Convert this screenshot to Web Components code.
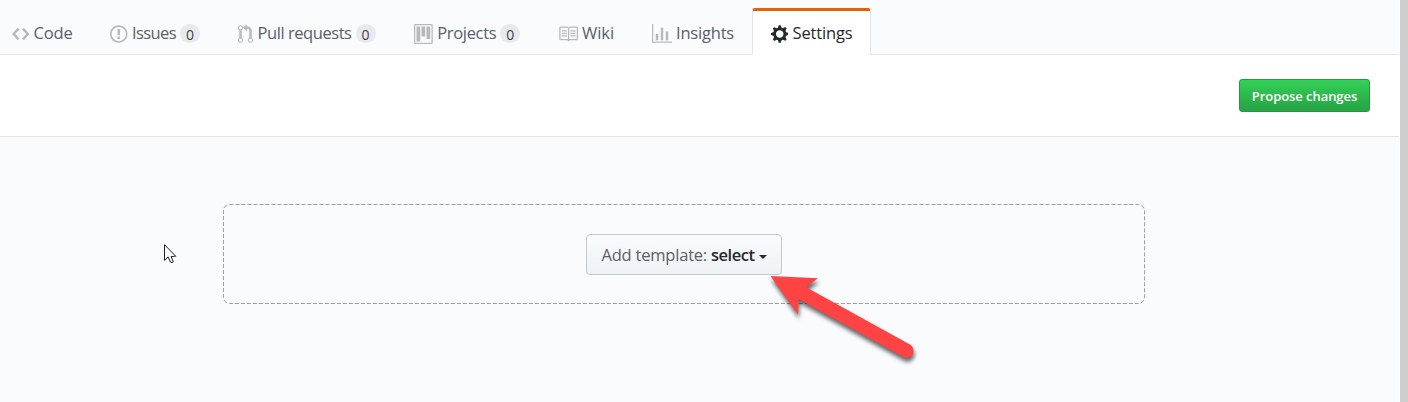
<!DOCTYPE html>
<html lang="en"><head><meta charset="utf-8"><title>Settings</title>
<style>html,body{margin:0;height:100%;overflow:hidden}body{font-family:"Open Sans","Noto Sans",sans-serif;background:#fafbfd}</style></head>
<body><settings-page></settings-page>
<script>
const define=(name,html,setup)=>customElements.define(name,class extends HTMLElement{
  constructor(){super();this.attachShadow({mode:'open'}).innerHTML=html}
  connectedCallback(){if(setup)setup(this,this.shadowRoot)}
});
const icons={
code:[14,'M9.5 3L8 4.5 11.5 8 8 11.5 9.5 13 14 8 9.5 3zm-5 0L0 8l4.5 5L6 11.5 2.5 8 6 4.5 4.5 3z'],
issue:[14,'M7 2.3c3.14 0 5.7 2.56 5.7 5.7s-2.56 5.7-5.7 5.7A5.71 5.71 0 0 1 1.3 8c0-3.14 2.56-5.7 5.7-5.7zM7 1C3.14 1 0 4.14 0 8s3.14 7 7 7 7-3.14 7-7-3.14-7-7-7zm1 3H6v5h2V4zm0 6H6v2h2v-2z'],
pull:[12,'M11 11.28V5c-.03-.78-.34-1.47-.94-2.06C9.46 2.35 8.78 2.03 8 2H7V0L4 3l3 3V4h1c.27.02.48.11.69.31.21.2.3.42.31.69v6.28A1.993 1.993 0 0 0 10 15a1.993 1.993 0 0 0 1-3.72zm-1 2.92c-.66 0-1.2-.55-1.2-1.2 0-.65.55-1.2 1.2-1.2.65 0 1.2.55 1.2 1.2 0 .65-.55 1.2-1.2 1.2zM4 3c0-1.11-.89-2-2-2a1.993 1.993 0 0 0-1 3.72v6.56A1.993 1.993 0 0 0 2 15a1.993 1.993 0 0 0 1-3.72V4.72c.59-.34 1-.98 1-1.72zm-.8 10c0 .66-.55 1.2-1.2 1.2-.65 0-1.2-.55-1.2-1.2 0-.65.55-1.2 1.2-1.2.65 0 1.2.55 1.2 1.2zM2 4.2C1.34 4.2.8 3.65.8 3c0-.65.55-1.2 1.2-1.2.65 0 1.2.55 1.2 1.2 0 .65-.55 1.2-1.2 1.2z'],
project:[15,'M10 12h3V2h-3v10zm-4-2h3V2H6v8zm-4 4h3V2H2v12zm-1 1h13V1H1v14zM14 0H1a1 1 0 0 0-1 1v14a1 1 0 0 0 1 1h13a1 1 0 0 0 1-1V1a1 1 0 0 0-1-1z'],
wiki:[16,'M3 5h4v1H3V5zm0 3h4V7H3v1zm0 2h4V9H3v1zm11-5h-4v1h4V5zm0 2h-4v1h4V7zm0 2h-4v1h4V9zm2-6v9c0 .55-.45 1-1 1H9.500l-1 1-1-1H2c-.55 0-1-.45-1-1V3c0-.55.45-1 1-1h5.500l1 1 1-1H15c.55 0 1 .45 1 1zm-8 .5L7.500 3H2v9h6V3.500zm7-.5H9.500l-.5.5V12h6V3z'],
graph:[16,'M16 14v1H0V0h1v14h15zM5 13H3V8h2v5zm4 0H7V3h2v10zm4 0h-2V6h2v7z'],
gear:[14,'M14 8.770v-1.600l-1.940-.640-.450-1.090.880-1.840-1.130-1.130-1.810.910-1.090-.450-.690-1.920h-1.600l-.630 1.940-1.110.450-1.840-.880-1.130 1.130.910 1.810-.450 1.090L0 7.230v1.590l1.940.640.450 1.090-.880 1.840 1.130 1.130 1.810-.910 1.090.450.690 1.920h1.590l.630-1.940 1.110-.450 1.840.880 1.130-1.130-.920-1.810.470-1.090L14 8.750v.020zM7 11c-1.660 0-3-1.340-3-3s1.340-3 3-3 3 1.340 3 3-1.340 3-3 3z']};
define('oct-icon','<style>:host{display:block;flex:none}svg{display:block;fill:currentColor;fill-rule:evenodd}</style><svg height="20"><path/></svg>',(h,r)=>{
  const [w,d]=icons[h.getAttribute('name')],s=r.querySelector('svg');
  s.setAttribute('viewBox',`0 0 ${w} 16`);s.setAttribute('width',w*1.25);s.firstChild.setAttribute('d',d);
});
/* A single-line label whose tracking adapts to its allotted width. */
define('fit-label','<style>:host{display:block;flex:none;white-space:nowrap}span{display:inline-block}</style><span><slot></slot></span>',(h,r)=>{
  const w=+h.getAttribute('width'),s=r.querySelector('span');h.style.width=w+'px';
  s.style.letterSpacing=(w-s.getBoundingClientRect().width)/h.textContent.length+'px';
});
define('count-pill','<style>:host{display:block;flex:none;width:20px;height:19px;border-radius:10px;background:#e7e9eb;color:#3c444c;font:500 14px/21px "Open Sans",sans-serif;text-align:center;margin:-2px 0 0 4px}</style><slot></slot>');
define('nav-tab',`<style>:host{display:flex;align-items:center;box-sizing:border-box;height:47px;padding:5px 0 0 19px;font-size:16.5px;line-height:24px;color:#586069}
::slotted(oct-icon){color:#b7babd}::slotted(fit-label){margin:-2px 0 0 var(--gap,4.500px)}
:host([active]){background:#fff;color:#24292e;border:1px solid #e1e4e8;border-top:3px solid #e36209;border-bottom:0;border-radius:3px 3px 0 0;padding:2px 0 0 17.5px}
:host([active]) ::slotted(oct-icon){color:#24292e}</style><slot name="icon"></slot><slot name="label"></slot><slot></slot>`);
define('repo-nav','<style>:host{display:grid;grid-template-columns:91px 128px 176px 144px 94px 119px 119px;box-sizing:border-box;height:55px;padding-top:8px;border-bottom:1px solid #e1e4e8}</style><slot></slot>');
define('propose-button','<style>:host{display:flex;justify-content:center;align-items:center;box-sizing:border-box;width:131px;height:33px;border:1px solid #28963f;border-radius:3px;background:linear-gradient(#34d058,#28a745 90%);color:#fff;font-size:13px;font-weight:600;line-height:20px;padding-top:1px}</style><fit-label width="105.500">Propose changes</fit-label>');
define('template-select',`<style>:host{display:flex;align-items:center;box-sizing:border-box;width:196px;height:41px;border:1px solid #c5c9cd;border-radius:4px;background:linear-gradient(#fafbfc,#eff3f6 90%);padding:1px 0 0 14.5px;font-size:16.5px;line-height:24px;color:#586069}
.value{font-weight:600;color:#24292e;margin-left:4px}i{border:4px solid transparent;border-top-color:#24292e;border-bottom:0;margin:5px 0 0 4px}</style><fit-label width="105.500">Add template:</fit-label><fit-label class="value" width="43.500">select</fit-label><i></i>`);
define('pointer-arrow',`<style>:host{position:absolute;left:760px;top:265px;pointer-events:none}svg{display:block;overflow:visible;filter:drop-shadow(1px 4px 2px #0009)}</style>
<svg width="165" height="110"><path fill="#ff4242" d="M10.500 11 58 13.300 46.200 22.200 149.500 79.300A7 7 0 0 1 143.500 92L38.500 34 38 49.500Z"/></svg>`);
define('mouse-cursor',`<style>:host{position:absolute;left:164px;top:244px}svg{display:block}</style><svg width="13" height="20"><path d="M.5.7v15.600l3.600-3.400 2.400 5.200 1.500.5 1.300-.8-2.200-5.300 4.600-.3z" fill="#fff" stroke="#1b1b28"/></svg>`);
define('settings-page',`<style>:host{display:flex;width:1408px;height:402px}main{position:relative;width:1399px;background:#fafbfd;border-right:1px solid #fff}
aside{width:8px;background:#cdcdcd}header{display:flex;justify-content:flex-end;align-items:center;box-sizing:border-box;height:82px;padding-right:29px;background:#fff;border-bottom:1px solid #e1e4e8}
section{display:flex;align-items:center;justify-content:center;width:922px;height:100px;margin:67px 0 0 223px;position:relative}
.dash{position:absolute;inset:0;width:922px;height:100px}template-select{position:relative}</style>
<main><repo-nav>
<nav-tab style="padding-left:11.500px"><oct-icon slot="icon" name="code"></oct-icon><fit-label slot="label" width="39">Code</fit-label></nav-tab>
<nav-tab><oct-icon slot="icon" name="issue"></oct-icon><fit-label slot="label" width="44">Issues</fit-label><count-pill>0</count-pill></nav-tab>
<nav-tab><oct-icon slot="icon" name="pull"></oct-icon><fit-label slot="label" width="94">Pull requests</fit-label><count-pill>0</count-pill></nav-tab>
<nav-tab><oct-icon slot="icon" name="project"></oct-icon><fit-label slot="label" width="59">Projects</fit-label><count-pill>0</count-pill></nav-tab>
<nav-tab style="--gap:4px"><oct-icon slot="icon" name="wiki"></oct-icon><fit-label slot="label" width="32">Wiki</fit-label></nav-tab>
<nav-tab style="--gap:4px"><oct-icon slot="icon" name="graph"></oct-icon><fit-label slot="label" width="58">Insights</fit-label></nav-tab>
<nav-tab active><oct-icon slot="icon" name="gear"></oct-icon><fit-label slot="label" width="60">Settings</fit-label></nav-tab>
</repo-nav><header><propose-button></propose-button></header>
<section><svg class="dash"><rect x=".5" y=".5" width="921" height="99" rx="6" fill="none" stroke="#9da1a6" stroke-dasharray="4 2"/></svg><template-select></template-select></section>
<pointer-arrow></pointer-arrow><mouse-cursor></mouse-cursor></main><aside></aside>`);
</script></body></html>
